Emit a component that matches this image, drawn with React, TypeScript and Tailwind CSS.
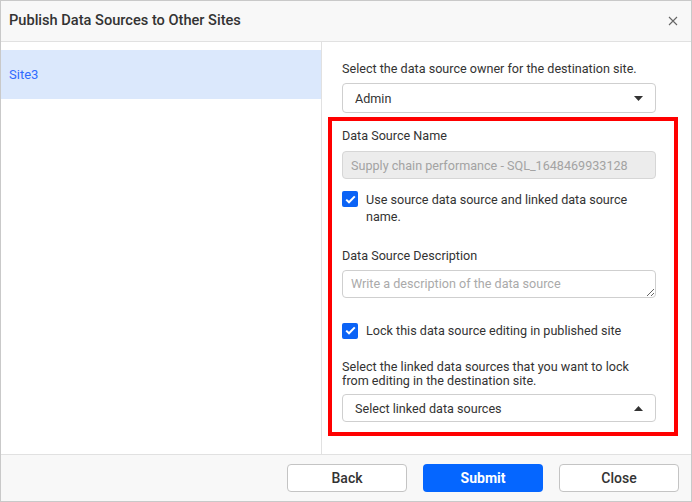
import React from 'react';

// small filled triangle used by the dropdowns
const Caret = ({ up = false }: { up?: boolean }) => (
  <svg width="9" height="5" viewBox="0 0 9 5" className="shrink-0">
    {up ? <path d="M0 5 L4.5 0 L9 5 Z" fill="#333" /> : <path d="M0 0 L9 0 L4.5 5 Z" fill="#333" />}
  </svg>
);

const CheckBox = () => (
  <div className="w-[16px] h-[16px] rounded-[2px] bg-[#0b63f6] flex items-center justify-center shrink-0">
    <svg width="11" height="9" viewBox="0 0 11 9">
      <path d="M1.2 4.6 L4 7.3 L9.8 1.4" stroke="#fff" strokeWidth="2" fill="none" />
    </svg>
  </div>
);

export default function App() {
  return (
    <div className="w-[692px] h-[502px] border border-[#c9c9c9] flex flex-col bg-white font-['Roboto',sans-serif] text-[#333]">
      {/* header */}
      <div className="h-[41px] shrink-0 bg-[#f8f8f8] border-b border-[#e1e1e1] flex items-center justify-between pl-2 pr-[13px]">
        <span className="text-[14.6px] font-medium text-[#333]">Publish Data Sources to Other Sites</span>
        <svg width="10" height="10" viewBox="0 0 10 10">
          <path d="M1 1 L9 9 M9 1 L1 9" stroke="#666" strokeWidth="1.1" />
        </svg>
      </div>

      {/* body */}
      <div className="flex flex-1 min-h-0">
        <div className="w-[321px] shrink-0 border-r border-[#e1e1e1] pt-2">
          <div className="h-[49px] bg-[#dbe8fc] flex items-center pl-2 text-[13px] text-[#2f6bff]">Site3</div>
        </div>

        <div className="relative flex-1 pl-5 pr-[35px] pt-[18px] text-[12.6px] leading-[17px]">
          <p>Select the data source owner for the destination site.</p>
          <div className="mt-[6px] h-[30px] border border-[#cfcfcf] rounded-[4px] flex items-center justify-between pl-3 pr-[12px]">
            <span>Admin</span>
            <Caret />
          </div>

          <p className="mt-[14px]">Data Source Name</p>
          <div className="mt-[7px] h-[28px] border border-[#d6d6d6] bg-[#ececec] rounded-[4px] flex items-center pl-2 text-[#a3a3a3]">
            Supply chain performance - SQL_1648469933128
          </div>

          <div className="mt-[12px] flex gap-2">
            <CheckBox />
            <span>
              Use source data source and linked data source
              <br />
              name.
            </span>
          </div>

          <p className="mt-[22px]">Data Source Description</p>
          <textarea
            rows={1}
            placeholder="Write a description of the data source"
            className="mt-[6px] block w-full h-[28px] border border-[#cfcfcf] rounded-[4px] px-2 py-[4px] text-[12.6px] leading-[17px] placeholder:text-[#aaa] outline-none"
          />

          <div className="mt-[24px] flex items-center gap-2">
            <CheckBox />
            <span>Lock this data source editing in published site</span>
          </div>

          <p className="mt-[21px] leading-[14px]">
            Select the linked data sources that you want to lock
            <br />
            from editing in the destination site.
          </p>
          <div className="mt-[6px] h-[28px] border border-[#cfcfcf] rounded-[4px] flex items-center justify-between pl-3 pr-[12px]">
            <span>Select linked data sources</span>
            <Caret up />
          </div>

          {/* annotation frame */}
          <div className="absolute left-[6px] top-[75px] w-[350px] h-[319px] border-4 border-[#ff0000] pointer-events-none" />
        </div>
      </div>

      {/* footer */}
      <div className="h-[47px] shrink-0 bg-[#f8f8f8] border-t border-[#e1e1e1] flex items-center justify-end gap-4 pr-3">
        <button className="w-[120px] h-[28px] bg-white border border-[#c4c4c4] rounded-[4px] text-[14px] font-medium text-[#333]">Back</button>
        <button className="w-[120px] h-[28px] bg-[#0566ff] rounded-[4px] text-[14px] font-bold text-white">Submit</button>
        <button className="w-[120px] h-[28px] bg-white border border-[#c4c4c4] rounded-[4px] text-[14px] font-medium text-[#333]">Close</button>
      </div>
    </div>
  );
}
